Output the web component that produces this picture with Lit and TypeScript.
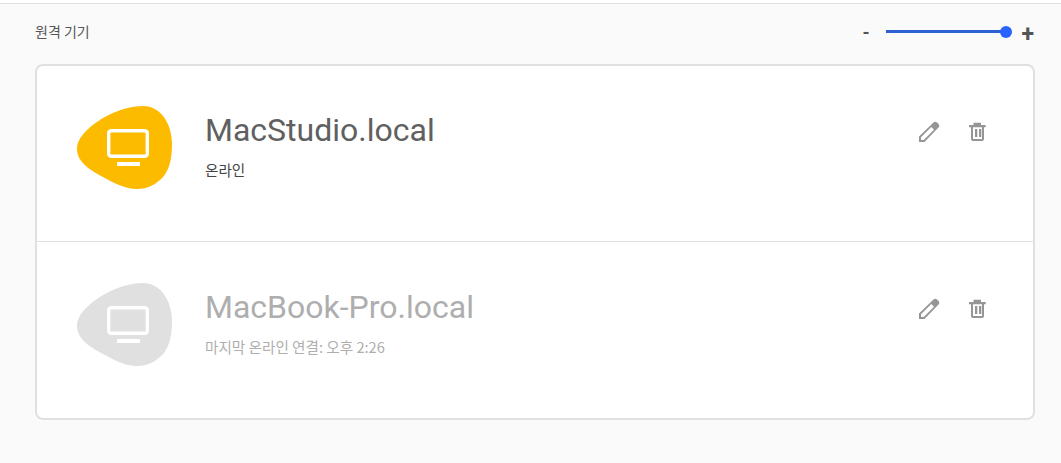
import { LitElement, html, css, svg } from 'lit';
import { customElement } from 'lit/decorators.js';
import { classMap } from 'lit/directives/class-map.js';

interface Device {
  name: string;
  status: string;
  online: boolean;
}

const devices: Device[] = [
  { name: 'MacStudio.local', status: '온라인', online: true },
  { name: 'MacBook-Pro.local', status: '마지막 온라인 연결: 오후 2:26', online: false },
];

const blob = svg`
  <path class="blob" d="M0 43C0 31 13 20 26 12C40 4 54 0 66 0C84 0 95 18 95 38C95 56 91 67 83 74C76 80 69 83 60 83C48 83 37 77 26 71C13 64 0 56 0 43Z"/>
  <rect x="31.700" y="24.700" width="38.600" height="25.600" rx="2.500" fill="none" stroke="#fff" stroke-width="3.400"/>
  <rect x="40" y="56" width="23" height="4" fill="#fff"/>
`;

@customElement('app-root')
export class AppRoot extends LitElement {
  static styles = css`
    :host {
      display: block;
      height: 463px;
      box-sizing: border-box;
      background: #fafafa;
      font-family: Roboto, 'Noto Sans CJK KR', sans-serif;
      overflow: hidden;
    }
    .top-rule {
      height: 3px;
      background: #fff;
      border-bottom: 1px solid #e0e0e0;
    }
    .content {
      padding: 0 27px 0 35px;
    }
    .toolbar {
      height: 60px;
      display: flex;
      align-items: center;
      justify-content: space-between;
    }
    .heading {
      font: 14px 'Noto Sans CJK KR', sans-serif;
      color: #555;
      margin-top: -7px;
    }
    .zoom {
      display: flex;
      align-items: center;
      margin-top: -5px;
      color: #555;
      font-weight: 700;
    }
    .minus {
      font-size: 18px;
      width: 24px;
      margin-top: 2px;
    }
    .plus {
      font-size: 23px;
      margin-left: 15px;
      margin-top: 7px;
      line-height: 20px;
    }
    .track {
      width: 120px;
      height: 2.500px;
      background: #2b5fd4;
      display: flex;
      align-items: center;
      justify-content: flex-end;
    }
    .thumb {
      width: 12px;
      height: 12px;
      border-radius: 50%;
      background: #2962ff;
      margin-right: -6px;
      flex: none;
    }
    .card {
      width: 1000px;
      box-sizing: border-box;
      background: #fff;
      border: 2px solid #e0e0e0;
      border-radius: 8px;
    }
    .row {
      height: 176px;
      box-sizing: border-box;
      padding: 40px 43px 0 40px;
      display: flex;
      align-items: flex-start;
      border-bottom: 1px solid #e0e0e0;
    }
    .row:last-child {
      border-bottom: 0;
    }
    .row + .row {
      padding-top: 41px;
    }
    .avatar {
      width: 95px;
      height: 83px;
      flex: none;
    }
    .blob {
      fill: #fdbb00;
    }
    .offline .blob {
      fill: #e0e0e0;
    }
    .info {
      margin-left: 33px;
      flex: 1;
    }
    .name {
      font-size: 32px;
      line-height: 48px;
      color: #606060;
    }
    .status {
      font: 14.600px/20px 'Noto Sans CJK KR', sans-serif;
      color: #444;
      margin-top: 6px;
    }
    .offline .name,
    .offline .status {
      color: #aeaeae;
    }
    .actions {
      display: flex;
      gap: 25px;
      margin-top: 14px;
    }
    .actions svg {
      width: 24px;
      height: 24px;
      fill: #959595;
      display: block;
    }
  `;

  render() {
    return html`
      <div class="top-rule"></div>
      <div class="content">
        <div class="toolbar">
          <div class="heading">원격 기기</div>
          <div class="zoom">
            <span class="minus">-</span>
            <div class="track"><div class="thumb"></div></div>
            <span class="plus">+</span>
          </div>
        </div>
        <div class="card">
          ${devices.map(
            (d) => html`
              <div class=${classMap({ row: true, offline: !d.online })}>
                <svg class="avatar" viewBox="0 0 95 83">${blob}</svg>
                <div class="info">
                  <div class="name">${d.name}</div>
                  <div class="status">${d.status}</div>
                </div>
                <div class="actions">
                  <svg viewBox="0 0 24 24">
                    <path fill-rule="evenodd" d="M2 22v-5.500L16.500 2.500c1-1 2.500-1 3.500 0l1.500 1.500c1 1 1 2.500 0 3.500L7.500 22zM4 20h2.700L17 9.700 14.300 7 4 17.300z"/>
                  </svg>
                  <svg viewBox="0 0 24 24">
                    <path fill-rule="evenodd" d="M7.500 2.700h7.500v2.300h4.700v2.300H18V19a2 2 0 0 1-2 2H7a2 2 0 0 1-2-2V7.300H3V5h4.500zM7 7.300V19h9V7.300z"/>
                    <path d="M9 9h2.300v8H9zM13 9h2.300v8H13z"/>
                  </svg>
                </div>
              </div>
            `
          )}
        </div>
      </div>
    `;
  }
}
